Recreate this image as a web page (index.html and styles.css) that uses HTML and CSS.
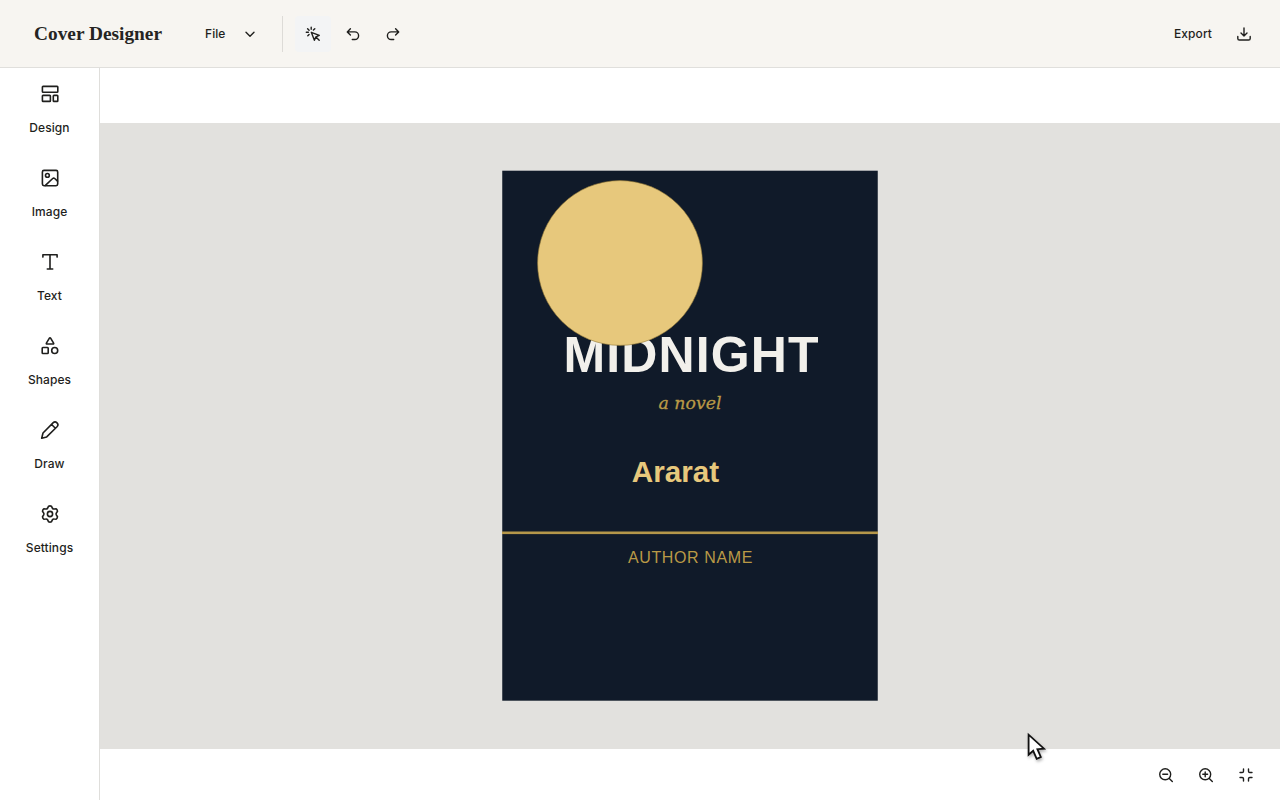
FILE: index.html
```
<!DOCTYPE html>
<html lang="en">
<head>
<meta charset="utf-8">
<title>Cover Designer</title>
<link rel="stylesheet" href="styles.css">
</head>
<body>
<header class="topbar">
  <svg class="brand" viewBox="0 0 130 28"><text class="brand-text" x="0" y="20.3" textLength="128" lengthAdjust="spacingAndGlyphs">Cover Designer</text></svg>
  <button class="file-menu"><span>File</span>
    <svg class="icon" viewBox="0 0 20 20"><path d="M6 8.2l4 4 4-4"/></svg>
  </button>
  <span class="divider"></span>
  <nav class="tools">
    <button class="tool active" aria-label="Select"><svg class="icon" viewBox="0 0 20 20"><path d="M8.3 8.3l8 3-3.4 1.5-1.5 3.5zM13.2 13.2l3 3M8.2 3.2v2.1M3.3 8.3h2.1M4.6 4.7l1.5 1.5M11.8 4.7l-1.4 1.4M4.8 11.7l1.3-1.3"/></svg></button>
    <button class="tool" aria-label="Undo"><svg class="icon" viewBox="0 0 20 20"><path d="M7.4 4.7L4.3 7.9l3.1 3.1M4.4 7.9h7.4a3.8 3.8 0 0 1 0 7.6H9.3"/></svg></button>
    <button class="tool" aria-label="Redo"><svg class="icon" viewBox="0 0 20 20"><path d="M12.6 4.7l3.1 3.2-3.1 3.1M15.6 7.9H8.2a3.8 3.8 0 0 0 0 7.6h2.5"/></svg></button>
  </nav>
  <button class="export"><span>Export</span>
    <svg class="icon" viewBox="0 0 20 20"><path d="M10 4v8M7 9l3 3 3-3M3.8 12.4v2c0 1 .6 1.6 1.6 1.6h9.2c1 0 1.6-.6 1.6-1.6v-2"/></svg>
  </button>
</header>
<div class="workspace">
  <aside class="sidebar">
    <button class="side-item"><svg class="icon" viewBox="0 0 20 20"><rect x="2.4" y="2.4" width="15.4" height="5.8" rx=".7"/><rect x="2.4" y="11.4" width="8" height="6" rx=".7"/><rect x="13.3" y="11.4" width="4.5" height="6" rx=".7"/></svg><span>Design</span></button>
    <button class="side-item"><svg class="icon" viewBox="0 0 20 20"><rect x="2.4" y="2.4" width="15.3" height="15.3" rx="1.6"/><circle cx="7.4" cy="7.4" r="1.9"/><path d="M5.4 17.4l7.3-6.9c.7-.6 1.3-.6 2 0l2.8 2.6"/></svg><span>Image</span></button>
    <button class="side-item"><svg class="icon" viewBox="0 0 20 20"><path d="M2.9 5.1V2.8h14.2v2.3M10 2.8v14.1M7.3 17h5.4"/></svg><span>Text</span></button>
    <button class="side-item"><svg class="icon" viewBox="0 0 20 20"><path d="M9.4 2.2L6.4 7.1c-.3.5 0 .9.5.9h6.2c.5 0 .8-.4.5-.9l-3-4.9c-.3-.5-.9-.5-1.2 0z"/><rect x="2.2" y="11.5" width="6" height="6" rx=".7"/><circle cx="14.7" cy="14.5" r="3"/></svg><span>Shapes</span></button>
    <button class="side-item"><svg class="icon" viewBox="0 0 20 20"><path d="M13 2.9c2.7-2.6 6.6 1.2 4 3.9L6.7 16.9l-5 1.4L3 13zM11.6 4.5l3.8 3.8"/></svg><span>Draw</span></button>
    <button class="side-item"><svg class="icon" viewBox="0 0 20 20"><path d="M8.6 2.2q1.4-.7 2.8 0l1.1 2.2q.7.8 1.7.6l2-.2q1.2.9 1.3 2.4l-1.2 1.9q-.4.9 0 1.8l1.2 1.9q-.1 1.5-1.3 2.4l-2-.2q-1-.2-1.7.6l-1.1 2.2q-1.4.7-2.8 0l-1.1-2.2q-.7-.8-1.7-.6l-2 .2q-1.2-.9-1.3-2.4l1.2-1.9q.4-.9 0-1.8L2.5 7.2q.1-1.5 1.3-2.4l2 .2q1 .2 1.7-.6z"/><circle cx="10" cy="10" r="2.6"/></svg><span>Settings</span></button>
  </aside>
  <main class="editor">
    <section class="stage">
      <svg class="cover" viewBox="0 0 376 531">
        <rect class="paper" x=".25" y=".7" width="375.5" height="530"/>
        <text class="title" x="61.5" y="202" textLength="255">MIDNIGHT</text>
        <circle class="moon" cx="118" cy="93" r="82.4"/>
        <text class="subtitle" x="156.5" y="238.5" textLength="63" lengthAdjust="spacingAndGlyphs">a novel</text>
        <text class="name" x="129.7" y="311.7" textLength="87.5" lengthAdjust="spacingAndGlyphs">Ararat</text>
        <rect class="rule" x="0" y="361.5" width="376" height="2.6"/>
        <text class="author" x="126" y="393" textLength="124.3">AUTHOR NAME</text>
      </svg>
    </section>
    <footer class="zoombar">
      <button class="tool" aria-label="Zoom out"><svg class="icon" viewBox="0 0 20 20"><circle cx="9.2" cy="9.3" r="5.5"/><path d="M13.3 13.4l3 3M6.8 9.3h4.8"/></svg></button>
      <button class="tool" aria-label="Zoom in"><svg class="icon" viewBox="0 0 20 20"><circle cx="9.2" cy="9.3" r="5.5"/><path d="M13.3 13.4l3 3M6.8 9.3h4.8M9.2 6.9v4.8"/></svg></button>
      <button class="tool" aria-label="Fit to screen"><svg class="icon" viewBox="0 0 20 20"><path d="M7.5 4v2.2c0 .9-.4 1.3-1.3 1.3H4M12.5 4v2.2c0 .9.4 1.3 1.3 1.3H16M7.5 16v-2.2c0-.9-.4-1.3-1.3-1.3H4M12.5 16v-2.2c0-.9.4-1.3 1.3-1.3H16"/></svg></button>
    </footer>
  </main>
</div>
<svg class="cursor" viewBox="0 0 24 32"><path d="M3.6 3.7v20.1l4.6-4 3.5 8 4.1-1.8-3.4-7.8 6.6-.5z"/></svg>
</body>
</html>
```

FILE: styles.css
```
* { box-sizing: border-box; }
body {
  margin: 0;
  width: 1280px;
  height: 800px;
  display: flex;
  flex-direction: column;
  overflow: hidden;
  background: #fff;
  color: #1f1f1d;
  font: 500 12px Inter, "Liberation Sans", sans-serif;
  letter-spacing: .07px;
}
button {
  border: 0;
  padding: 0;
  background: none;
  color: inherit;
  font: inherit;
  letter-spacing: inherit;
}
.icon {
  display: block;
  flex: none;
  width: 20px;
  height: 20px;
  fill: none;
  stroke: currentColor;
  stroke-width: 1.4;
  stroke-linecap: round;
  stroke-linejoin: round;
}
.topbar {
  flex: none;
  height: 68px;
  padding: 0 26px 0 34px;
  display: flex;
  align-items: center;
  background: #f7f5f1;
  border-bottom: 1px solid #e0dfdc;
}
.brand { width: 130px; height: 28px; overflow: visible; }
.brand-text {
  font: 700 19px "Liberation Serif", serif;
  letter-spacing: 0;
  fill: #252422;
}
.file-menu {
  width: 52px;
  margin-left: 41px;
  display: flex;
  align-items: center;
  justify-content: space-between;
}
.file-menu .icon { margin-right: -3px; }
.divider {
  width: 1px;
  height: 36px;
  margin: 0 12px 0 25px;
  background: #dddbd7;
}
.tools { display: flex; gap: 4px; }
.tool {
  width: 36px;
  height: 36px;
  display: grid;
  place-items: center;
  border-radius: 4px;
}
.active { background: #f3f4f5; }
.export {
  margin-left: auto;
  display: flex;
  align-items: center;
  gap: 22px;
}
.workspace { flex: 1; display: flex; min-height: 0; }
.sidebar {
  flex: none;
  width: 100px;
  padding-top: 16px;
  display: flex;
  flex-direction: column;
  gap: 32px;
  border-right: 1px solid #dfdedb;
}
.side-item {
  height: 52px;
  display: flex;
  flex-direction: column;
  align-items: center;
  gap: 16px;
  line-height: 16px;
}
.side-item .icon { stroke-width: 1.6; }
.editor {
  flex: 1;
  display: flex;
  flex-direction: column;
  padding-top: 55px;
}
.stage {
  height: 626px;
  display: flex;
  justify-content: center;
  align-items: flex-start;
  padding-top: 47px;
  background: #e2e1de;
}
.cover { width: 376px; height: 531px; letter-spacing: 0; }
.paper { fill: #101a29; }
.moon { fill: #e7c87c; stroke: #8f7536; stroke-width: .6; }
.title { font: 700 50px "Liberation Sans", Arial, sans-serif; fill: #f2f0eb; }
.subtitle {
  font: italic 400 17.5px "DejaVu Serif", serif;
  fill: #b99946;
  stroke: #b99946;
  stroke-width: .3;
}
.name { font: 700 30px "Liberation Sans", Arial, sans-serif; fill: #e7c87c; }
.rule { fill: #b5974a; }
.author { font: 400 16px "Liberation Sans", Arial, sans-serif; fill: #b99946; }
.zoombar {
  flex: 1;
  display: flex;
  justify-content: flex-end;
  align-items: center;
  gap: 4px;
  padding-right: 16px;
}
.cursor {
  position: absolute;
  left: 1025px;
  top: 731px;
  width: 24px;
  height: 32px;
  fill: #fff;
  stroke: #111;
  stroke-width: 1.8;
  filter: drop-shadow(1px 2px 1.5px rgba(0, 0, 0, .3));
}
```
